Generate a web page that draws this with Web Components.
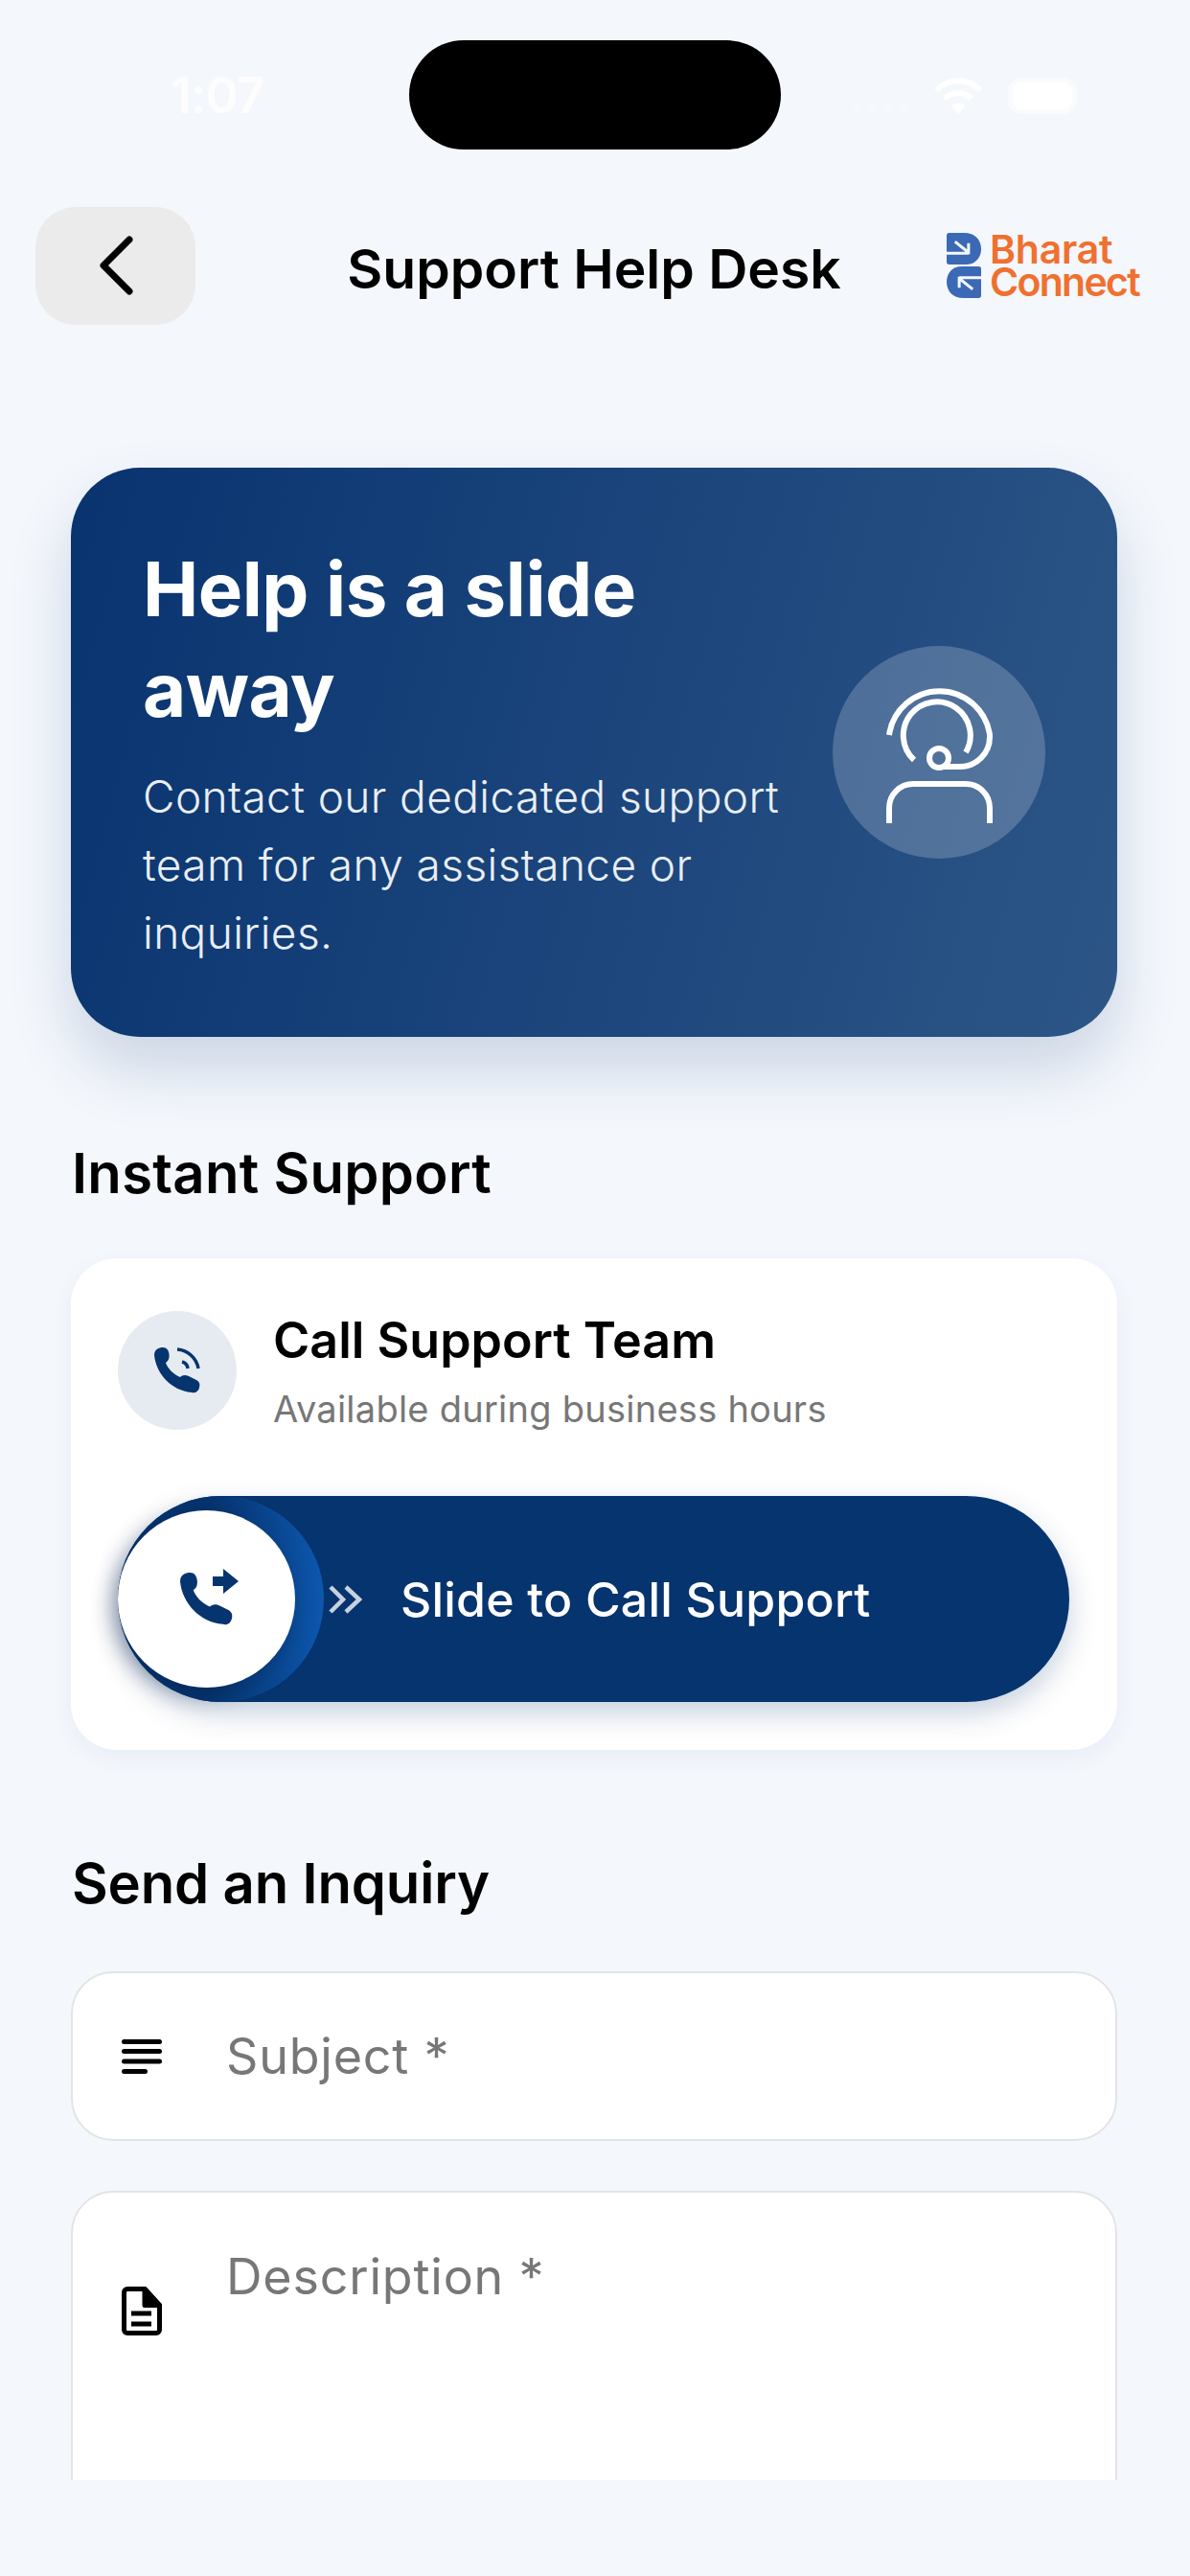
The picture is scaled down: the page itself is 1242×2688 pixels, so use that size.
<!DOCTYPE html>
<html lang="en">
<head>
<meta charset="utf-8">
<title>Support Help Desk</title>
<style>
   html, body { margin: 0; background: #f4f7fc; }
   body { font-family: Inter, "Liberation Sans", sans-serif; width: 1242px; height: 2688px; overflow: hidden; }
</style>
</head>
<body>

<help-desk-page></help-desk-page>

<script>
const statusBarTemplate = document.createElement('template');
statusBarTemplate.innerHTML = `
   <style>
      :host { display: grid; grid-template-columns: 1fr 388px 1fr; height: 186px; padding-top: 42px; box-sizing: border-box; }
      .time { padding: 30px 0 0 178px; font-size: 52px; line-height: 56px; font-weight: 600; color: #ffffff; opacity: .85; letter-spacing: -1px; }
      .notch { height: 114px; background: #000; border-radius: 57px; }
      .right { display: flex; justify-content: flex-end; align-items: flex-start; gap: 32px; padding: 39px 123px 0 0; }
      .signal { margin-right: -7px; opacity: .12; }
      .battery { width: 62px; height: 28px; margin-top: 5px; background: #fff; border-radius: 9px; box-shadow: 0 0 0 5px rgba(255,255,255,.45); }
   </style>
   <div class="time">1:07</div>
   <div class="notch"></div>
   <div class="right">
      <svg class="signal" width="60" height="38" viewBox="0 0 60 38" fill="#fff"><rect x="0" y="28" width="10" height="10"/><rect x="16" y="28" width="10" height="10"/><rect x="32" y="28" width="10" height="10"/><rect x="48" y="28" width="10" height="10"/></svg>
      <svg width="50" height="38" viewBox="0 0 50 38" fill="none" stroke="#fff" stroke-width="6">
         <path d="M2 13C15 0 35 0 48 13"/>
         <path d="M11 22c8-8 20-8 28 0"/>
         <path d="M25 38l-7-9c4-3 10-3 14 0z" fill="#fff" stroke="none"/>
      </svg>
      <div class="battery"></div>
   </div>`;

class StatusBar extends HTMLElement {
   constructor() {
      super();
      this.attachShadow({mode: 'open'});
      this.shadowRoot.append(statusBarTemplate.content.cloneNode(true));
   }
}

const logoTemplate = document.createElement('template');
logoTemplate.innerHTML = `
   <style>
      :host { display: flex; align-items: center; gap: 9px; font-family: Inter, sans-serif; margin: -2px 8px 0 0; }
      .words { display: flex; flex-direction: column; color: #f0702f; font-size: 41px; line-height: 34px; font-weight: 600; letter-spacing: -1.7px; }
      .words span:first-child { letter-spacing: -.2px; }
   </style>
   <svg width="36" height="68" viewBox="0 0 107 202">
      <g>
         <path fill="#3b69b5" d="M8 0H55C88 0 107 22 107 50C107 76 90 98 60 98H8Q0 98 0 90V8Q0 0 8 0Z"/>
         <path d="M0 63H68M26 27L68 61M68 32V66" fill="none" stroke="#f4f7fc" stroke-width="9"/>
      </g>
      <g transform="rotate(180 53.500 101)">
         <path fill="#3b69b5" d="M8 0H55C88 0 107 22 107 50C107 76 90 98 60 98H8Q0 98 0 90V8Q0 0 8 0Z"/>
         <path d="M0 63H68M26 27L68 61M68 32V66" fill="none" stroke="#f4f7fc" stroke-width="9"/>
      </g>
   </svg>
   <div class="words"><span>Bharat</span><span>Connect</span></div>`;

class BharatLogo extends HTMLElement {
   constructor() {
      super();
      this.attachShadow({mode: 'open'});
      this.shadowRoot.append(logoTemplate.content.cloneNode(true));
   }
}

const topBarTemplate = document.createElement('template');
topBarTemplate.innerHTML = `
   <style>
      :host { display: grid; grid-template-columns: 1fr auto 1fr; align-items: center; height: 153px; padding: 30px 45px 0 37px; box-sizing: border-box; }
      button { display: flex; align-items: center; justify-content: center; width: 167px; height: 123px; padding: 0; border: none; border-radius: 42px; background: #ebebeb; }
      h1 { margin: 6px 0 0 6px; font-size: 57px; line-height: 66px; font-weight: 600; color: #000; white-space: nowrap; }
      .logo { justify-self: end; }
   </style>
   <button aria-label="Back">
      <svg width="42" height="66" viewBox="0 0 42 66" fill="none" stroke="#000" stroke-width="7" stroke-linecap="round" stroke-linejoin="round"><path d="M35 6 8 33l27 27" transform="translate(0 -1)"/></svg>
   </button>
   <h1><slot></slot></h1>
   <bharat-logo class="logo"></bharat-logo>`;

class TopBar extends HTMLElement {
   constructor() {
      super();
      this.attachShadow({mode: 'open'});
      this.shadowRoot.append(topBarTemplate.content.cloneNode(true));
   }
}

const heroTemplate = document.createElement('template');
heroTemplate.innerHTML = `
   <style>
      :host { display: flex; align-items: center; justify-content: space-between; height: 594px; padding: 0 75px; box-sizing: border-box; border-radius: 72px; color: #fff;
         background: linear-gradient(105deg, #08336f 0%, #2d5687 100%); box-shadow: 0 34px 64px rgba(8,51,111,.17); }
      .text { width: 700px; }
      h2 { margin: 0 0 24px; font-size: 78px; line-height: 105px; font-weight: 700; letter-spacing: -.5px; }
      p { margin: 0; font-size: 46px; line-height: 71px; font-weight: 300; letter-spacing: .4px; color: #e9eef5; }
      .circle { flex: none; width: 222px; height: 222px; border-radius: 50%; background: rgba(255,255,255,.2); }
   </style>
   <div class="text">
      <h2><slot name="title"></slot></h2>
      <p><slot></slot></p>
   </div>
   <div class="circle">
      <svg width="222" height="222" viewBox="69 53 222 222" fill="none" stroke="#fff" stroke-width="6">
         <path d="M128 146A53 53 0 0 1 233 146V148A31 31 0 0 1 202 179H184"/>
         <path d="M154 172A35 35 0 1 1 208 164"/>
         <circle cx="180" cy="170" r="10"/>
         <path d="M128 238V222A25 25 0 0 1 153 197H208A25 25 0 0 1 233 222V238"/>
      </svg>
   </div>`;

class HeroBanner extends HTMLElement {
   constructor() {
      super();
      this.attachShadow({mode: 'open'});
      this.shadowRoot.append(heroTemplate.content.cloneNode(true));
   }
}

const sectionTitleTemplate = document.createElement('template');
sectionTitleTemplate.innerHTML = `
   <style>
      :host { display: block; font-size: 58px; line-height: 70px; font-weight: 600; letter-spacing: .3px; color: #000; padding-left: 1px; }
   </style>
   <slot></slot>`;

class SectionTitle extends HTMLElement {
   constructor() {
      super();
      this.attachShadow({mode: 'open'});
      this.shadowRoot.append(sectionTitleTemplate.content.cloneNode(true));
   }
}

const PHONE = 'M0 8C0 2 5 0 9 0C13 0 15 3 15.500 7C16 11 15 14 12 16C14 22 20 28 27 31C29 29 32 28 36 30L44 34C47 36 48 38 47 42C46 46 43 48 39 47C18 45 2 28 0 8Z';

const sliderTemplate = document.createElement('template');
sliderTemplate.innerHTML = `
   <style>
      :host { display: flex; align-items: center; position: relative; height: 215px; border-radius: 108px; background: #06346f; color: #fff; box-shadow: 0 12px 30px rgba(6,52,111,.22); }
      .glow { position: absolute; left: 0; top: 0; width: 215px; height: 215px; border-radius: 50%; background: linear-gradient(90deg, #06346f 45%, #0d57ae 100%); }
      .thumb { position: absolute; left: 0; top: 15px; width: 185px; height: 185px; border-radius: 50%; background: #fff; display: flex; align-items: center; justify-content: center; box-shadow: -4px 6px 22px rgba(6,30,70,.45); }
      .thumb svg { margin: -4px 0 0 6px; }
      .chevrons { margin-left: 220px; }
      .label { margin-left: 40px; font-size: 50px; line-height: 60px; font-weight: 500; letter-spacing: .2px; }
   </style>
   <div class="glow"></div>
   <div class="thumb">
      <svg width="61" height="59" viewBox="0 0 61 59" fill="#06346f">
         <path transform="translate(0 4) scale(1.146)" d="${PHONE}"/>
         <path d="M34 8h11V0l16 13-16 13v-8H34z"/>
      </svg>
   </div>
   <svg class="chevrons" width="35" height="30" viewBox="0 0 35 30" fill="none" stroke="rgba(255,255,255,.78)" stroke-width="4.500"><path d="M2 2l13 13L2 28M18 2l14 13-14 13"/></svg>
   <span class="label"><slot></slot></span>`;

class SlideButton extends HTMLElement {
   constructor() {
      super();
      this.attachShadow({mode: 'open'});
      this.shadowRoot.append(sliderTemplate.content.cloneNode(true));
   }
}

const callCardTemplate = document.createElement('template');
callCardTemplate.innerHTML = `
   <style>
      :host { display: block; padding: 55px 50px 50px 49px; border-radius: 48px; background: #fff; box-shadow: 0 8px 24px rgba(8,51,111,.05); }
      .row { display: flex; gap: 38px; margin-bottom: 68px; }
      .icon { flex: none; display: flex; align-items: center; justify-content: center; width: 124px; height: 124px; border-radius: 50%; background: #e6ebf1; }
      h3 { margin: 0 0 17px; font-size: 52px; line-height: 62px; font-weight: 600; color: #000; }
      p { margin: 0; font-size: 38px; line-height: 46px; color: #777; letter-spacing: .25px; }
   </style>
   <div class="row">
      <div class="icon">
         <svg width="48" height="48" viewBox="0 0 48 48" fill="#06346f">
            <path d="${PHONE}"/>
            <path d="M24 2A24 24 0 0 1 46 22M29 15A8 8 0 0 1 35 22" fill="none" stroke="#06346f" stroke-width="3.500"/>
         </svg>
      </div>
      <div>
         <h3><slot name="title"></slot></h3>
         <p><slot name="hours"></slot></p>
      </div>
   </div>
   <slot></slot>`;

class CallCard extends HTMLElement {
   constructor() {
      super();
      this.attachShadow({mode: 'open'});
      this.shadowRoot.append(callCardTemplate.content.cloneNode(true));
   }
}

const formFieldTemplate = document.createElement('template');
formFieldTemplate.innerHTML = `
   <style>
      :host { display: flex; align-items: center; gap: 67px; box-sizing: border-box; height: 177px; padding: 0 40px 0 51px; border: 2px solid #e3e4e6; border-radius: 44px; background: #fff; font-size: 52px; line-height: 64px; color: #777; letter-spacing: .8px; }
      :host([multiline]) { align-items: flex-start; height: 420px; padding-top: 56px; }
      :host([multiline]) .icon { margin-top: 42px; }
      .icon { flex: none; width: 42px; display: flex; }
   </style>
   <div class="icon"><slot name="icon"></slot></div>
   <slot></slot>`;

class FormField extends HTMLElement {
   constructor() {
      super();
      this.attachShadow({mode: 'open'});
      this.shadowRoot.append(formFieldTemplate.content.cloneNode(true));
   }
}

const pageTemplate = document.createElement('template');
pageTemplate.innerHTML = `
   <style>
      :host { display: block; }
      main { display: block; height: 2249px; overflow: hidden; box-sizing: border-box; padding: 149px 76px 0 74px; }
      .inst { margin: 107px 0 54px; }
      .inq { margin: 104px 0 57px; letter-spacing: -.15px; }
      form-field + form-field { margin-top: 52px; }
   </style>
   <status-bar></status-bar>
   <top-bar>Support Help Desk</top-bar>
   <main>
      <hero-banner>
         <span slot="title">Help is a slide<br>away</span>
         Contact our dedicated support<br>team for any assistance or<br>inquiries.
      </hero-banner>
      <section-title class="inst">Instant Support</section-title>
      <call-card>
         <span slot="title">Call Support Team</span>
         <span slot="hours">Available during business hours</span>
         <slide-button>Slide to Call Support</slide-button>
      </call-card>
      <section-title class="inq">Send an Inquiry</section-title>
      <form-field>
         <svg slot="icon" width="42" height="36" viewBox="0 0 42 36" fill="none" stroke="#000" stroke-width="5" stroke-linecap="round"><path d="M2.500 2.500h37M2.500 12.500h37M2.500 23h37M2.500 33.500h22"/></svg>
         Subject *
      </form-field>
      <form-field multiline>
         <svg slot="icon" width="42" height="51" viewBox="0 0 42 51" fill="none" stroke="#000" stroke-width="5" stroke-linejoin="round"><path d="M2.500 6a3.500 3.500 0 0 1 3.500-3.500h18l15.500 17v25.500a3.500 3.500 0 0 1-3.500 3.500H6a3.500 3.500 0 0 1-3.500-3.500z"/><path d="M24 2.500l15.500 17H24z" fill="#000"/><path d="M10 28h21M10 39h21"/></svg>
         Description *
      </form-field>
   </main>`;

class HelpDeskPage extends HTMLElement {
   constructor() {
      super();
      this.attachShadow({mode: 'open'});
      this.shadowRoot.append(pageTemplate.content.cloneNode(true));
   }
}

window.customElements.define('status-bar', StatusBar);
window.customElements.define('bharat-logo', BharatLogo);
window.customElements.define('top-bar', TopBar);
window.customElements.define('hero-banner', HeroBanner);
window.customElements.define('section-title', SectionTitle);
window.customElements.define('slide-button', SlideButton);
window.customElements.define('call-card', CallCard);
window.customElements.define('form-field', FormField);
window.customElements.define('help-desk-page', HelpDeskPage);
</script>
</body>
</html>
